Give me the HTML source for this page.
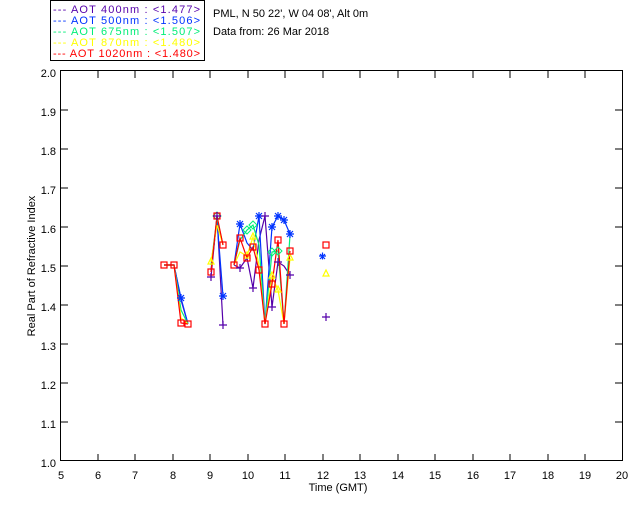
<!DOCTYPE html>
<html><head><style>
body{margin:0;background:#fff;width:640px;height:512px;overflow:hidden}
svg{display:block}
text{font-family:"Liberation Sans",sans-serif;font-size:11px}
</style></head><body>
<svg width="640" height="512" viewBox="0 0 640 512">
<rect x="50.5" y="0.5" width="154" height="60" fill="#fff" stroke="#000"/>
<g font-size="11" xml:space="preserve">
<text x="53" y="13" fill="#5500aa" textLength="147" lengthAdjust="spacing">--- AOT  400nm : &lt;1.477&gt;</text>
<text x="53" y="24" fill="#0033ff" textLength="147" lengthAdjust="spacing">--- AOT  500nm : &lt;1.506&gt;</text>
<text x="53" y="35" fill="#00ee77" textLength="147" lengthAdjust="spacing">--- AOT  675nm : &lt;1.507&gt;</text>
<text x="53" y="46" fill="#ffff00" textLength="147" lengthAdjust="spacing">--- AOT  870nm : &lt;1.480&gt;</text>
<text x="53" y="57" fill="#ff0000" textLength="147" lengthAdjust="spacing">--- AOT 1020nm : &lt;1.480&gt;</text>
</g>
<text x="213" y="17">PML, N 50 22', W 04 08', Alt 0m</text>
<text x="213" y="35">Data from: 26 Mar 2018</text>
<rect x="60.5" y="70.5" width="562" height="390" fill="none" stroke="#000"/>
<g stroke="#000">
<path d="M98 461v-7M135 461v-7M173 461v-7M210 461v-7M248 461v-7M285 461v-7M323 461v-7M360 461v-7M398 461v-7M435 461v-7M473 461v-7M510 461v-7M548 461v-7M585 461v-7M98 71v7M135 71v7M173 71v7M210 71v7M248 71v7M285 71v7M323 71v7M360 71v7M398 71v7M435 71v7M473 71v7M510 71v7M548 71v7M585 71v7"/>
<path d="M61 110h7M61 149h7M61 188h7M61 227h7M61 266h7M61 305h7M61 344h7M61 383h7M61 422h7M622 110h-7M622 149h-7M622 188h-7M622 227h-7M622 266h-7M622 305h-7M622 344h-7M622 383h-7M622 422h-7"/>
</g>
<g text-anchor="end">
<text x="56" y="77">2.0</text><text x="56" y="116">1.9</text><text x="56" y="155">1.8</text><text x="56" y="194">1.7</text><text x="56" y="233">1.6</text><text x="56" y="272">1.5</text><text x="56" y="311">1.4</text><text x="56" y="350">1.3</text><text x="56" y="389">1.2</text><text x="56" y="428">1.1</text><text x="56" y="467">1.0</text>
</g>
<g text-anchor="middle">
<text x="61" y="479">5</text><text x="98" y="479">6</text><text x="135" y="479">7</text><text x="173" y="479">8</text><text x="210" y="479">9</text><text x="248" y="479">10</text><text x="285" y="479">11</text><text x="323" y="479">12</text><text x="360" y="479">13</text><text x="398" y="479">14</text><text x="435" y="479">15</text><text x="473" y="479">16</text><text x="510" y="479">17</text><text x="548" y="479">18</text><text x="585" y="479">19</text><text x="622" y="479">20</text>
<text x="338" y="491">Time (GMT)</text>
</g>
<text transform="translate(35,266) rotate(-90)" text-anchor="middle">Real Part of Refractive Index</text>
<g fill="none" stroke-width="1.2">
<polyline stroke="#5500aa" points="164,265 174,265 181,300 188,324"/>
<polyline stroke="#5500aa" points="211,277 217,216 223,325"/>
<polyline stroke="#5500aa" points="234,265 240,268 247,258 253,288 259,240 265,216 272,307 278,262 284,266 290,275"/>
<polyline stroke="#0033ff" points="164,265 174,265 181,298 188,324"/>
<polyline stroke="#0033ff" points="211,270 217,220 223,296"/>
<polyline stroke="#0033ff" points="234,265 240,224 247,243 253,250 259,216 265,324 272,227 278,216 284,220 290,234"/>
<polyline stroke="#00ee77" points="164,265 174,265 181,310 188,324"/>
<polyline stroke="#00ee77" points="211,265 217,218 223,245"/>
<polyline stroke="#00ee77" points="234,265 240,240 247,230 253,225 259,245 265,324 272,252 278,251 284,324 290,235"/>
<polyline stroke="#ffff00" points="164,265 174,265 181,318 188,324"/>
<polyline stroke="#ffff00" points="211,262 217,225 223,245"/>
<polyline stroke="#ffff00" points="234,265 240,252 247,256 253,237 259,265 265,324 272,276 278,290 284,324 290,258"/>
<polyline stroke="#ff0000" points="164,265 174,265 181,323 188,324"/>
<polyline stroke="#ff0000" points="211,272 217,216 223,245"/>
<polyline stroke="#ff0000" points="234,265 240,238 247,258 253,247 259,270 265,324 272,284 278,240 284,324 290,251"/>
</g>
<g fill="none" stroke="#00ee77" stroke-width="1"><path d="M217 212l4 4-4 4-4-4zM247 226l4 4-4 4-4-4zM253 221l4 4-4 4-4-4zM272 248l4 4-4 4-4-4zM278 247l4 4-4 4-4-4z"/></g>
<g fill="none" stroke="#ffff00" stroke-width="1.2"><path d="M211 258l-3 6h6zM247 252l-3 6h6zM253 233l-3 6h6zM272 272l-3 6h6zM278 286l-3 6h6zM290 254l-3 6h6zM326 270l-3 6h6z"/></g>
<g fill="none" stroke="#ff0000" stroke-width="1.2">
<rect x="161" y="262" width="6" height="6"/><rect x="171" y="262" width="6" height="6"/><rect x="178" y="320" width="6" height="6"/><rect x="185" y="321" width="6" height="6"/><rect x="208" y="269" width="6" height="6"/><rect x="214" y="213" width="6" height="6"/><rect x="220" y="242" width="6" height="6"/><rect x="231" y="262" width="6" height="6"/><rect x="237" y="235" width="6" height="6"/><rect x="244" y="255" width="6" height="6"/><rect x="250" y="244" width="6" height="6"/><rect x="256" y="267" width="6" height="6"/><rect x="262" y="321" width="6" height="6"/><rect x="269" y="281" width="6" height="6"/><rect x="275" y="237" width="6" height="6"/><rect x="281" y="321" width="6" height="6"/><rect x="287" y="248" width="6" height="6"/><rect x="323" y="242" width="6" height="6"/>
</g>
<g stroke="#0033ff" stroke-width="1.2"><path d="M319 256h7M322.5 252.5v7M320 254l5 5M325 254l-5 5M219 296h8M223 292v8M220 293l6 6M226 293l-6 6M255 216h8M259 212v8M256 213l6 6M262 213l-6 6M274 216h8M278 212v8M275 213l6 6M281 213l-6 6M280 220h8M284 216v8M281 217l6 6M287 217l-6 6M286 234h8M290 230v8M287 231l6 6M293 231l-6 6M236 224h8M240 220v8M237 221l6 6M243 221l-6 6M268 227h8M272 223v8M269 224l6 6M275 224l-6 6M177 298h8M181 294v8M178 295l6 6M184 295l-6 6"/></g>
<g stroke="#5500aa" stroke-width="1.2"><path d="M322 317h8M326 313v8M219 325h8M223 321v8M207 277h8M211 273v8M261 216h8M265 212v8M268 307h8M272 303v8M286 275h8M290 271v8M213 216h8M217 212v8M249 288h8M253 284v8M236 268h8M240 264v8M274 262h8M278 258v8"/></g>
</svg>
</body></html>
